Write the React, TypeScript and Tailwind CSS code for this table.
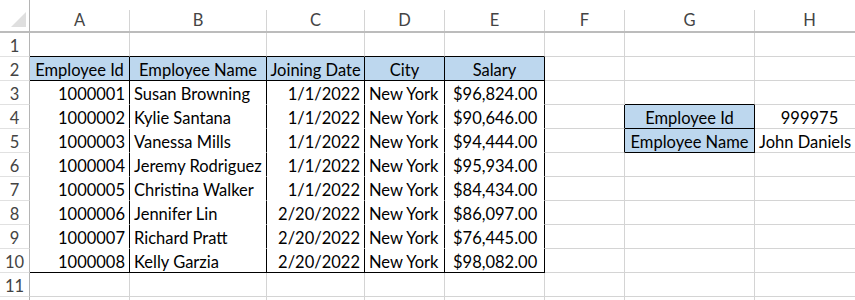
import React from "react";

type Align = "left" | "right" | "center" | "money";

interface CellSpec {
  text?: string;
  align?: Align;
  fill?: boolean;
}

const COLUMNS = ["A", "B", "C", "D", "E", "F", "G", "H"];

const EMPLOYEES = [
  ["1000001", "Susan Browning", "1/1/2022", "New York", "96,824.00"],
  ["1000002", "Kylie Santana", "1/1/2022", "New York", "90,646.00"],
  ["1000003", "Vanessa Mills", "1/1/2022", "New York", "94,444.00"],
  ["1000004", "Jeremy Rodriguez", "1/1/2022", "New York", "95,934.00"],
  ["1000005", "Christina Walker", "1/1/2022", "New York", "84,434.00"],
  ["1000006", "Jennifer Lin", "2/20/2022", "New York", "86,097.00"],
  ["1000007", "Richard Pratt", "2/20/2022", "New York", "76,445.00"],
  ["1000008", "Kelly Garzia", "2/20/2022", "New York", "98,082.00"],
];

const HEADERS = ["Employee Id", "Employee Name", "Joining Date", "City", "Salary"];
const DATA_ALIGN: Align[] = ["right", "left", "right", "left", "money"];

function getCell(row: number, col: number): CellSpec {
  if (row === 2 && col < 5) {
    return { text: HEADERS[col], align: "center", fill: true };
  }
  if (row >= 3 && row <= 10 && col < 5) {
    return { text: EMPLOYEES[row - 3][col], align: DATA_ALIGN[col] };
  }
  if (col === 6 && row === 4) return { text: "Employee Id", align: "center", fill: true };
  if (col === 6 && row === 5) return { text: "Employee Name", align: "center", fill: true };
  if (col === 7 && row === 4) return { text: "999975", align: "center" };
  if (col === 7 && row === 5) return { text: "John Daniels", align: "left" };
  return {};
}

function rightBorder(row: number, col: number): string {
  if (row >= 2 && row <= 10 && col < 5) return "border-r-black";
  if ((row === 4 || row === 5) && (col === 5 || col === 6)) return "border-r-black";
  return "border-r-[#d4d4d4]";
}

function bottomBorder(row: number, col: number): string {
  if (col < 5) {
    if (row === 1 || row === 2 || row === 10) return "border-b-black";
    if (row >= 3 && row <= 9) return "border-b-white";
  }
  if (col === 6 && row >= 3 && row <= 5) return "border-b-black";
  return "border-b-[#d4d4d4]";
}

function Cell({ row, col }: { row: number; col: number }): React.ReactElement {
  const spec = getCell(row, col);
  const base = `flex items-end pb-[2px] border-r border-b whitespace-nowrap overflow-visible ${rightBorder(row, col)} ${bottomBorder(row, col)} ${spec.fill ? "bg-[#bdd7ee]" : "bg-white"}`;

  if (spec.align === "money") {
    return (
      <div className={`${base} justify-between pl-[8px] pr-[8px]`}>
        <span>$</span>
        <span>{spec.text}</span>
      </div>
    );
  }

  const alignClass =
    spec.align === "right"
      ? "justify-end pr-[4px]"
      : spec.align === "center"
        ? "justify-center"
        : "justify-start pl-[4px]";

  return (
    <div className={`${base} ${alignClass}`}>
      <span className="relative z-10">{spec.text}</span>
    </div>
  );
}

export default function App(): React.ReactElement {
  const rows = Array.from({ length: 12 }, (_, i) => i + 1);

  return (
    <div className="h-[300px] w-[855px] overflow-hidden bg-white font-['Lato',sans-serif] text-[16.5px] leading-none text-black">
      <div className="grid grid-cols-[30px_100px_137px_98px_80px_100px_80px_130px_110px] grid-rows-[33px_repeat(12,24px)]">
        {/* corner */}
        <div className="flex items-end justify-end border-r border-b-2 border-r-[#b4b4b4] border-b-[#bcbcbc] pr-[3px] pb-[4px]">
          <svg width="15" height="15" viewBox="0 0 15 15" aria-hidden="true">
            <polygon points="15,0 15,15 0,15" fill="#dfdfdf" />
          </svg>
        </div>
        {COLUMNS.map((letter) => (
          <div key={letter} className="flex flex-col border-b-2 border-b-[#bcbcbc] pt-[10px]">
            <div className="flex flex-1 items-center justify-center border-r border-r-[#d4d4d4] text-[#444]">
              {letter}
            </div>
          </div>
        ))}

        {rows.map((row) => (
          <React.Fragment key={row}>
            <div className="flex items-end justify-center border-r border-b border-r-[#b4b4b4] border-b-[#e1e1e1] pb-[2px] text-[#444]">
              {row <= 11 ? row : ""}
            </div>
            {COLUMNS.map((_, col) => (
              <Cell key={col} row={row} col={col} />
            ))}
          </React.Fragment>
        ))}
      </div>
    </div>
  );
}
